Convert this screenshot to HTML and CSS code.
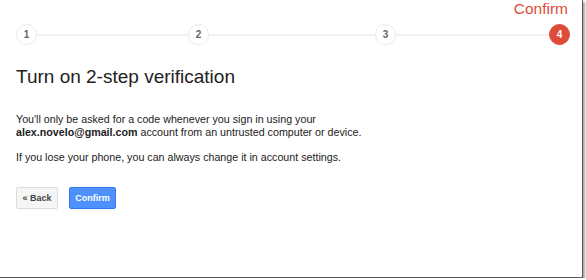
FILE: index.html
```html
<!DOCTYPE html>
<html>
<head>
<meta charset="utf-8">
<link rel="stylesheet" href="styles.css">
</head>
<body>
<div class="frame">
  <div class="step-label-row"><span class="step-label">Confirm</span></div>
  <div class="stepper">
    <div class="dot">1</div>
    <div class="line l1"></div>
    <div class="dot">2</div>
    <div class="line l2"></div>
    <div class="dot">3</div>
    <div class="line l3"></div>
    <div class="dot active">4</div>
  </div>
  <h1 class="title">Turn on 2-step verification</h1>
  <p class="text">You'll only be asked for a code whenever you sign in using your<br><b>alex.novelo@gmail.com</b> account from an untrusted computer or device.</p>
  <p class="text">If you lose your phone, you can always change it in account settings.</p>
  <div class="actions">
    <button class="btn btn-back">« Back</button>
    <button class="btn btn-confirm">Confirm</button>
  </div>
</div>
</body>
</html>
```

FILE: styles.css
```css
html, body {
  margin: 0;
  padding: 0;
  background: #fff;
}
body {
  font-family: "Liberation Sans", Arial, sans-serif;
  color: #222;
}
.frame {
  box-sizing: border-box;
  width: 583px;
  height: 278px;
  padding: 0 0 0 16px;
  border-right: 1px solid #5a5a5a;
  border-bottom: 1px solid #5a5a5a;
  box-shadow: 2px 2px 2px rgba(0, 0, 0, 0.35);
  background: #fff;
}
.step-label-row {
  display: flex;
  justify-content: flex-end;
  width: 552px;
  height: 21px;
}
.step-label {
  font-size: 15.5px;
  line-height: 18px;
  color: #dd4b39;
}
.stepper {
  display: flex;
  align-items: center;
  width: 554px;
  height: 21px;
  margin-top: 3px;
}
.dot {
  box-sizing: border-box;
  width: 21px;
  height: 21px;
  flex: none;
  border: 1px solid #ebebeb;
  border-radius: 50%;
  display: flex;
  align-items: center;
  justify-content: center;
  font-size: 10px;
  font-weight: bold;
  color: #666;
  background: #fff;
}
.dot.active {
  background: #dd4b39;
  border-color: #dd4b39;
  color: #fff;
}
.line {
  height: 2px;
  background: #f1f1f1;
}
.l1 { width: 151px; }
.l2 { width: 166px; }
.l3 { width: 153px; }
.title {
  margin: 20px 0 0;
  font-size: 19px;
  font-weight: normal;
  line-height: 24px;
  color: #222;
}
.text {
  margin: 24px 0 0;
  font-size: 10.7px;
  line-height: 13px;
  color: #222;
}
.text + .text {
  margin-top: 12px;
}
.actions {
  display: flex;
  gap: 11px;
  margin-top: 23px;
}
.btn {
  box-sizing: border-box;
  height: 22px;
  padding: 0;
  border-radius: 2px;
  white-space: nowrap;
  font-family: "Liberation Sans", Arial, sans-serif;
  font-size: 9px;
  font-weight: bold;
  text-align: center;
}
.btn-back {
  width: 42px;
  background: #f5f5f5;
  border: 1px solid #dcdcdc;
  color: #444;
}
.btn-confirm {
  width: 47px;
  background: #4d90fe;
  border: 1px solid #3079ed;
  color: #fff;
}
```
